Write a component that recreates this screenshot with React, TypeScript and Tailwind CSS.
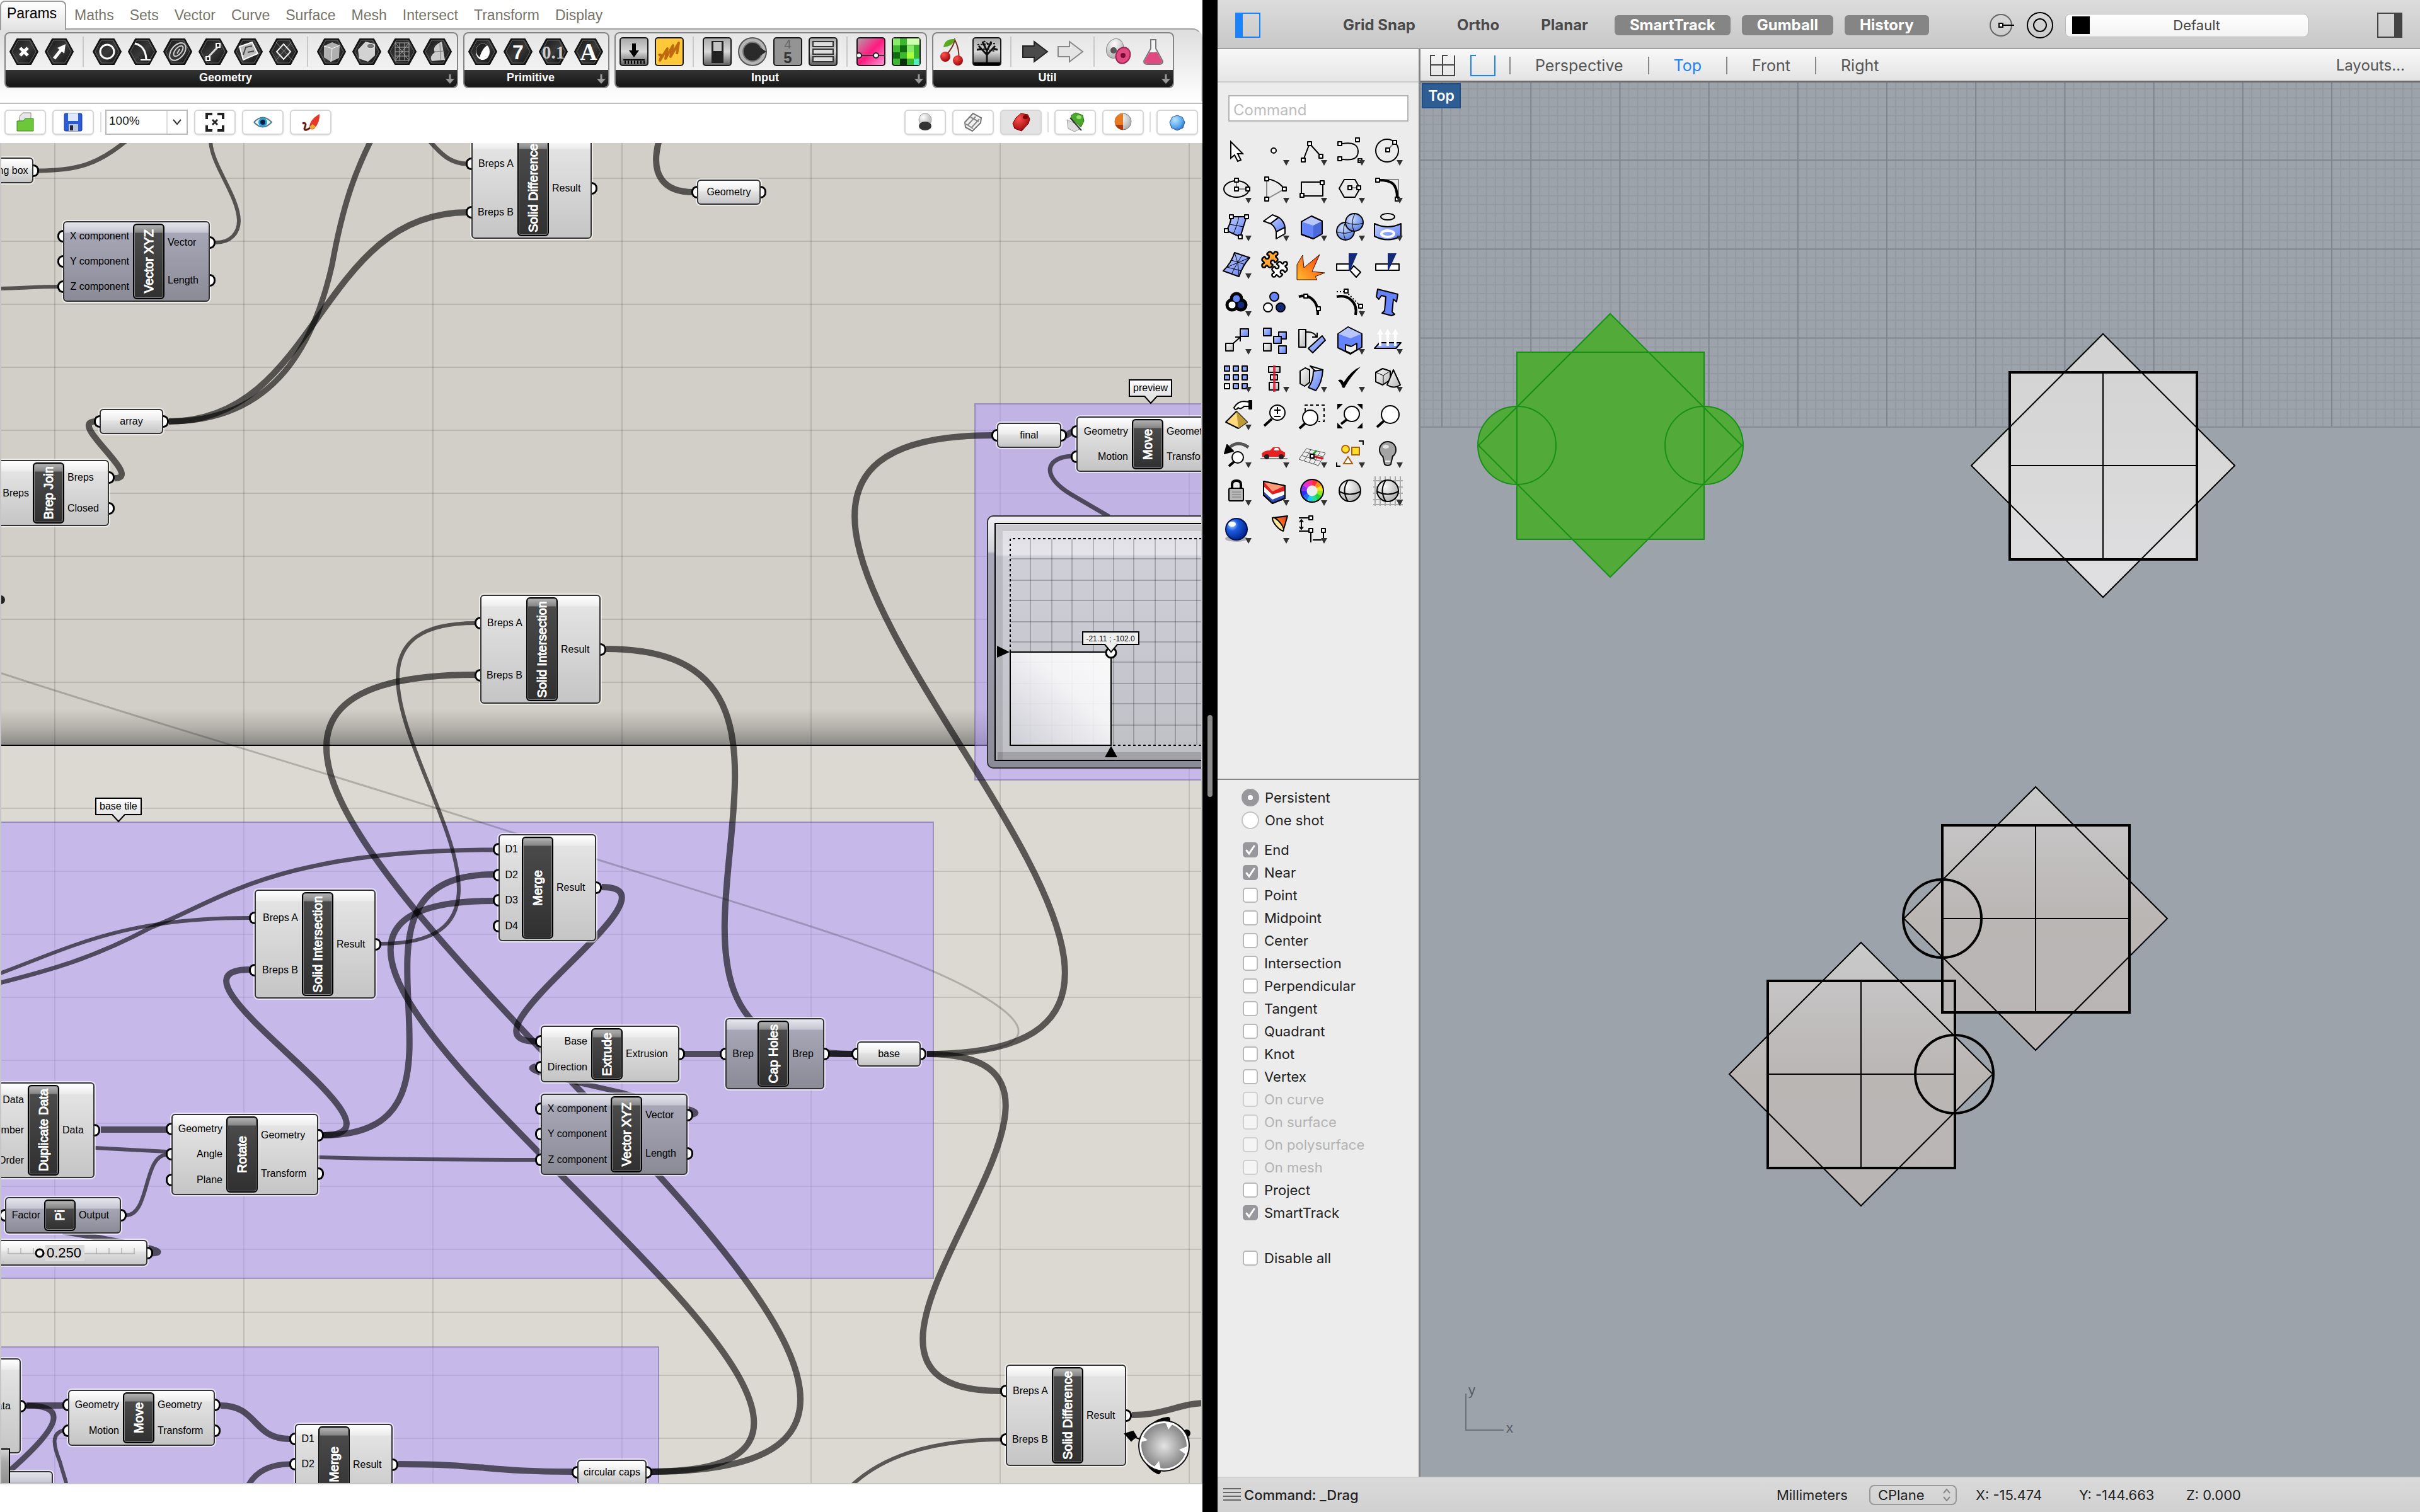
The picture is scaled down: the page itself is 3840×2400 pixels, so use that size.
import React from "react";
import { Puzzle } from "lucide-react";

/* ---------- shared paint ---------- */

function Defs() {
  return (
    <svg className="absolute h-0 w-0" aria-hidden="true">
      <defs>
        <linearGradient id="hex" x1="0" y1="0" x2="1" y2="1">
          <stop offset="0" stopColor="#111" />
          <stop offset="0.5" stopColor="#3a3a3a" />
          <stop offset="1" stopColor="#0a0a0a" />
        </linearGradient>
        <linearGradient id="steel" x1="0" y1="0" x2="0" y2="1">
          <stop offset="0" stopColor="#a8a8a8" />
          <stop offset="0.5" stopColor="#d8d8d8" />
          <stop offset="1" stopColor="#5a5a5a" />
        </linearGradient>
        <linearGradient id="blue" x1="0" y1="0" x2="1" y2="1">
          <stop offset="0" stopColor="#c3d0ff" />
          <stop offset="1" stopColor="#5b7df5" />
        </linearGradient>
        <linearGradient id="grey" x1="0" y1="0" x2="1" y2="1">
          <stop offset="0" stopColor="#ffffff" />
          <stop offset="1" stopColor="#b5b5b5" />
        </linearGradient>
        <linearGradient id="fire" x1="0" y1="1" x2="1" y2="0">
          <stop offset="0" stopColor="#ffc02e" />
          <stop offset="0.5" stopColor="#ff7a1e" />
          <stop offset="1" stopColor="#e0301e" />
        </linearGradient>
        <linearGradient id="pink" x1="0" y1="0" x2="1" y2="1">
          <stop offset="0" stopColor="#b0a0a8" />
          <stop offset="0.5" stopColor="#ff1a80" />
          <stop offset="1" stopColor="#ff9ad8" />
        </linearGradient>
        <linearGradient id="shell" x1="0" y1="0" x2="0" y2="1">
          <stop offset="0" stopColor="#d2d2d3" />
          <stop offset="0.5" stopColor="#d8d8d9" />
          <stop offset="1" stopColor="#e0e0e2" />
        </linearGradient>
        <linearGradient id="clay" x1="0" y1="0" x2="0" y2="1">
          <stop offset="0" stopColor="#cbcacb" />
          <stop offset="0.5" stopColor="#b9b6b4" />
          <stop offset="1" stopColor="#b9b5b5" />
        </linearGradient>
        <radialGradient id="ballBlue" cx="0.35" cy="0.3" r="0.8">
          <stop offset="0" stopColor="#d0e0ff" />
          <stop offset="1" stopColor="#4a76e0" />
        </radialGradient>
        <radialGradient id="ballDeep" cx="0.3" cy="0.3" r="0.8">
          <stop offset="0" stopColor="#b8dcff" />
          <stop offset="0.35" stopColor="#1a5ce0" />
          <stop offset="1" stopColor="#001a80" />
        </radialGradient>
        <radialGradient id="ballGrey" cx="0.35" cy="0.3" r="0.8">
          <stop offset="0" stopColor="#ffffff" />
          <stop offset="1" stopColor="#a8a8a8" />
        </radialGradient>
        <radialGradient id="ballRed" cx="0.35" cy="0.3" r="0.8">
          <stop offset="0" stopColor="#ff5050" />
          <stop offset="1" stopColor="#900000" />
        </radialGradient>
        <radialGradient id="ballSky" cx="0.35" cy="0.3" r="0.8">
          <stop offset="0" stopColor="#b8e4ff" />
          <stop offset="0.6" stopColor="#5aa8ec" />
          <stop offset="1" stopColor="#2a60b0" />
        </radialGradient>
        <radialGradient id="dial">
          <stop offset="0" stopColor="#e4e4e4" />
          <stop offset="1" stopColor="#868686" />
        </radialGradient>
      </defs>
    </svg>
  );
}

/* ---------- ribbon ---------- */

function Hex({ children }: { children: React.ReactNode }) {
  return (
    <svg width="46" height="46" viewBox="0 -2 46 46">
      <polygon points="1,21 12,1 34,1 45,21 34,41 12,41" fill="url(#hex)" stroke="#111" strokeWidth="2" strokeLinejoin="round" />
      <polygon points="4,21 14,3 32,3 42,21 32,39 14,39" fill="none" stroke="#666" strokeWidth="1" />
      {children}
    </svg>
  );
}

function Plate({ children, fill = "url(#steel)" }: { children: React.ReactNode; fill?: string }) {
  return (
    <svg width="46" height="46" viewBox="0 0 46 46">
      <rect x="1" y="1" width="44" height="44" rx="4" fill={fill} stroke="#1a1a1a" strokeWidth="2" />
      {children}
    </svg>
  );
}

type Tool = { label: string; art: React.ReactNode };
const sep = "sep" as const;

const geometry: (Tool | typeof sep)[] = [
  { label: "Geometry", art: <Hex><path d="M17 15 L29 27 M29 15 L17 27" stroke="#fff" strokeWidth="5" /></Hex> },
  { label: "Vector", art: <Hex><path d="M15 32 L26 18" stroke="#fff" strokeWidth="5" /><polygon points="20,15 33,9 31,24" fill="#fff" /></Hex> },
  sep,
  { label: "Circle", art: <Hex><circle cx="23" cy="21" r="11" fill="none" stroke="#fff" strokeWidth="3" /></Hex> },
  { label: "Circular Arc", art: <Hex><path d="M11 8 Q28 12 29 33" fill="none" stroke="#fff" strokeWidth="3" /><path d="M20 34 H36" stroke="#fff" strokeWidth="2" /></Hex> },
  { label: "Curve", art: <Hex><g fill="none" stroke="#ccc" strokeWidth="2"><ellipse cx="23" cy="21" rx="10" ry="16" transform="rotate(40 23 21)" /><ellipse cx="24" cy="20" rx="5" ry="10" transform="rotate(40 24 20)" /><path d="M22 24 L26 17" /></g></Hex> },
  { label: "Line", art: <Hex><path d="M14 31 L32 12" stroke="#ddd" strokeWidth="3" /><rect x="12" y="29" width="6" height="6" fill="#222" stroke="#fff" strokeWidth="2" /><rect x="28" y="8" width="6" height="6" fill="#222" stroke="#fff" strokeWidth="2" /></Hex> },
  { label: "Plane", art: <Hex><polygon points="9,13 29,6 38,24 15,34" fill="#bbb" stroke="#fff" strokeWidth="2" /><path d="M15 26 L19 14 L29 12 M22 22 L32 20" stroke="#444" strokeWidth="2" fill="none" /></Hex> },
  { label: "Rectangle", art: <Hex><path d="M11 6 L38 36 M35 6 L10 36" stroke="#888" strokeWidth="1" /><polygon points="23,9 34,21 23,33 12,21" fill="none" stroke="#eee" strokeWidth="2" /></Hex> },
  sep,
  { label: "Box", art: <Hex><polygon points="11,12 24,6 36,11 35,31 22,37 11,30" fill="#b0b0b0" /><path d="M11 12 L24 16 L36 11 M24 16 L22 37" stroke="#fff" fill="none" strokeWidth="1" /></Hex> },
  { label: "Brep", art: <Hex><polygon points="9,18 21,5 36,9 36,27 25,37 11,32" fill="#d2d2d2" /><ellipse cx="29" cy="12" rx="6" ry="4" fill="#777" stroke="#fff" /></Hex> },
  { label: "Mesh", art: <Hex><g stroke="#aaa" strokeWidth="1" fill="none"><path d="M12 7 H34 V35 H12 Z M12 14 H34 M12 21 H34 M12 28 H34 M19 7 V35 M27 7 V35 M12 7 L34 35 M34 7 L12 35" /></g></Hex> },
  { label: "Surface", art: <Hex><path d="M30 5 L35 34 L14 36 Q10 28 19 22 Q14 12 30 5Z" fill="#ccc" /><path d="M27 8 L28 34 M18 21 L33 20" stroke="#777" strokeWidth="1" /></Hex> },
];

const primitive: Tool[] = [
  { label: "Boolean", art: <Hex><ellipse cx="23" cy="21" rx="11" ry="13" fill="#fff" /><path d="M13 16 A11 13 0 0 1 30 11 Q22 16 18 30 A13 13 0 0 1 13 16" fill="#222" /></Hex> },
  { label: "Integer", art: <Hex><text x="23" y="33" textAnchor="middle" fontSize="32" fontWeight="bold" fill="#fff" fontFamily="Liberation Sans">7</text></Hex> },
  { label: "Number", art: <Hex><text x="23" y="32" textAnchor="middle" fontSize="29" fontWeight="bold" fill="#ccc" fontFamily="Liberation Serif">0.1</text></Hex> },
  { label: "Text", art: <Hex><text x="23" y="34" textAnchor="middle" fontSize="38" fontWeight="bold" fill="#fff" fontFamily="Liberation Serif">A</text></Hex> },
];

const input: (Tool | typeof sep)[] = [
  { label: "Number Slider", art: <Plate><path d="M23 10 V22" stroke="#000" strokeWidth="6" /><polygon points="15,21 31,21 23,32" fill="#000" /><path d="M6 36 H40" stroke="#000" strokeWidth="2" /><path d="M8 40 H40" stroke="#000" strokeWidth="5" strokeDasharray="2 3" /></Plate> },
  { label: "Panel", art: <Plate fill="#ffc83a"><path d="M6 29 Q13 25 8 37 L20 18 L17 34 L29 13 L25 31 L38 9 L35 27" fill="none" stroke="#c06a10" strokeWidth="4" strokeLinejoin="round" /></Plate> },
  sep,
  { label: "Toggle", art: <Plate><rect x="14" y="6" width="19" height="35" fill="#222" /><rect x="17" y="8" width="13" height="14" fill="#c4c4c4" /></Plate> },
  { label: "Knob", art: <svg width="46" height="46" viewBox="0 0 46 46"><circle cx="23" cy="23" r="22" fill="#b4b4b4" stroke="#555" strokeWidth="2" /><circle cx="23" cy="23" r="15" fill="#2a2a2a" stroke="#777" strokeWidth="2" /><polygon points="36,17 45,23 36,29" fill="#2a2a2a" /></svg> },
  { label: "Digit Scroller", art: <Plate fill="#949494"><text x="23" y="18" textAnchor="middle" fontSize="20" fill="#666" fontFamily="Liberation Sans">4</text><text x="23" y="41" textAnchor="middle" fontSize="24" fontWeight="bold" fill="#333" fontFamily="Liberation Sans">5</text></Plate> },
  { label: "Value List", art: <Plate><g fill="#ddd" stroke="#333" strokeWidth="2"><rect x="7" y="7" width="32" height="8" /><rect x="7" y="19" width="32" height="8" /><rect x="7" y="31" width="32" height="8" /></g></Plate> },
  sep,
  { label: "Gradient", art: <Plate fill="url(#pink)"><path d="M1 29 H45" stroke="#333" strokeWidth="2" /><circle cx="4" cy="29" r="4" fill="#fff" stroke="#222" strokeWidth="2" /><circle cx="31" cy="29" r="4" fill="#fff" stroke="#222" strokeWidth="2" /></Plate> },
  { label: "Image Sampler", art: <Plate fill="#3cb830"><path d="M2 2h11v11h-11z M24 13h11v11h-11z" fill="#8aea6a" /><path d="M24 2h20v10h-20z" fill="#d0ffb0" /><path d="M13 13h11v11h-11z M2 24h11v10h-11z" fill="#126a10" /><path d="M13 34h11v10h-11z" fill="#063006" /><path d="M24 24h11v10h-11z" fill="#a8ff3a" /><path d="M35 34h9v10h-9z" fill="#50f0c0" /></Plate> },
];

const util: (Tool | typeof sep)[] = [
  { label: "Cherry Picker", art: <svg width="46" height="46" viewBox="0 0 46 46"><path d="M13 30 Q26 16 28 4 Q36 20 34 34" fill="none" stroke="#7a3020" strokeWidth="2" /><path d="M10 16 Q12 2 28 3 Q26 14 10 16" fill="#5aa820" /><circle cx="13" cy="31" r="8" fill="url(#ballRed)" /><circle cx="33" cy="37" r="8" fill="url(#ballRed)" /></svg> },
  { label: "Param Viewer", art: <Plate><path d="M23 43 V22 M23 28 L10 14 M23 28 L36 14 M23 22 L16 7 M23 22 L30 7 M14 19 L7 20 M33 18 L40 20" stroke="#111" strokeWidth="3" /><path d="M8 12 L38 10 M12 18 L35 22 M18 6 L30 14" stroke="#111" strokeWidth="2" strokeDasharray="3 2" /><path d="M2 42 H44" stroke="#000" strokeWidth="4" /></Plate> },
  sep,
  { label: "Data Input", art: <svg width="46" height="46" viewBox="0 0 46 46"><path d="M4 14 H22 V7 L43 23 L22 39 V32 H4Z" fill="#4a4a4a" stroke="#222" strokeWidth="2" /></svg> },
  { label: "Data Output", art: <svg width="46" height="46" viewBox="0 0 46 46"><path d="M4 15 H22 V7 L43 23 L22 39 V31 H4Z" fill="#e4e4e4" stroke="#888" strokeWidth="2" /></svg> },
  sep,
  { label: "Trigger", art: <svg width="46" height="46" viewBox="0 0 46 46"><ellipse cx="18" cy="18" rx="13" ry="16" transform="rotate(25 18 18)" fill="url(#ballGrey)" stroke="#888" /><ellipse cx="31" cy="29" rx="11" ry="13" transform="rotate(25 31 29)" fill="#e04a80" stroke="#a02050" strokeWidth="2" /><circle cx="16" cy="21" r="5" fill="#555" /><circle cx="31" cy="29" r="4" fill="#7a1038" /></svg> },
  { label: "Fitness", art: <svg width="46" height="46" viewBox="0 0 46 46"><path d="M19 4 H27 L27 18 L38 38 Q38 43 32 43 H14 Q8 43 8 38 L19 18Z" fill="#f4f4f6" stroke="#777" strokeWidth="2" /><path d="M17 24 H29 L37 38 Q37 42 32 42 H14 Q9 42 9 38Z" fill="#e04a80" /></svg> },
];

function ToolGroup({ title, items }: { title: string; items: (Tool | typeof sep)[] }) {
  return (
    <section className="flex h-[89px] flex-col overflow-hidden rounded-lg border-2 border-[#858585] bg-linear-to-b from-[#e6e6e6] to-[#f8f8f8]">
      <div className="flex flex-1 items-center gap-[10px] pr-[8px] pl-[6px]">
        {items.map((t, i) =>
          t === sep ? (
            <span key={i} className="mx-[4px] h-12 w-[2px] bg-[#c9c9c9]" />
          ) : (
            <button key={i} aria-label={t.label} className="block">{t.art}</button>
          )
        )}
      </div>
      <div className="relative flex h-[27px] items-center justify-center bg-linear-to-b from-[#333] to-[#171717] pr-[18px] text-[18px] leading-none font-bold text-white">
        <span className="pb-1">{title}</span>
        <svg className="absolute right-[4px] bottom-[5px]" width="14" height="15" viewBox="0 0 14 15"><path d="M7 0 V8" stroke="#999" strokeWidth="3" /><polygon points="0,7 14,7 7,15" fill="#999" /></svg>
      </div>
    </section>
  );
}

const tabs = ["Maths", "Sets", "Vector", "Curve", "Surface", "Mesh", "Intersect", "Transform", "Display"];

function Ribbon() {
  return (
    <header className="h-[163px] shrink-0">
      <nav className="flex h-[45px] items-center gap-px text-[23px] leading-none text-[#77756a]">
        <button className="relative z-10 -mb-[3px] h-[47px] w-[105px] rounded-t-lg border-2 border-b-0 border-[#9b9b9b] bg-linear-to-b from-white to-[#e2e2e2] pr-1 pb-2 text-black">Params</button>
        {tabs.map((t) => (
          <button key={t} className="px-[12px] pt-[4px]">{t}</button>
        ))}
      </nav>
      <div className="flex h-[116px] items-start gap-[8px] rounded-tr-2xl border-t-2 border-r-2 border-t-[#a0a0a0] border-r-[#ddd] bg-linear-to-b from-[#dedede] to-white pt-[4px] pl-[7px]">
        <ToolGroup title="Geometry" items={geometry} />
        <ToolGroup title="Primitive" items={primitive} />
        <ToolGroup title="Input" items={input} />
        <ToolGroup title="Util" items={util} />
      </div>
    </header>
  );
}

function BarButton({ label, active, children }: { label: string; active?: boolean; children: React.ReactNode }) {
  return (
    <button
      aria-label={label}
      className={`flex h-10 w-[66px] items-center justify-center rounded-md border-2 border-[#d6d6d6] shadow-sm ${active ? "bg-[#e3e3e3]" : "bg-white"}`}
    >
      <svg width="32" height="32" viewBox="0 0 32 32">{children}</svg>
    </button>
  );
}

function CanvasBar() {
  return (
    <div className="flex h-[64px] shrink-0 items-center gap-[10px] border-t-2 border-[#bfbfbf] bg-white px-[7px] pb-1">
      <BarButton label="Open"><path d="M6 14 L8 5 L13 1 H25 V14Z" fill="#e6e6e6" stroke="#888" /><path d="M3 14 H13 L16 10 H29 V30 H3Z" fill="#6cc83a" stroke="#3a8a1a" /></BarButton>
      <BarButton label="Save"><rect x="2" y="2" width="28" height="28" rx="2" fill="#2a5cd8" stroke="#1a3a9a" /><rect x="8" y="2" width="16" height="12" fill="#dfe8ff" /><rect x="9" y="19" width="15" height="11" fill="#b8c4dc" /><rect x="11" y="21" width="5" height="8" fill="#223" /></BarButton>
      <span className="-mr-[4px] h-8 w-[2px] bg-[#ddd]" />
      <div className="relative flex h-10 w-[131px] border-2 border-[#bbb]">
        <select aria-label="Zoom" className="w-full appearance-none bg-white px-1 pb-1 text-[19px] leading-[32px] text-[#222]"><option>100%</option></select>
        <span className="pointer-events-none absolute inset-y-0 right-0 flex w-8 items-center justify-center border-l-2 border-[#ddd] bg-white">
          <svg width="16" height="10" viewBox="0 0 16 10"><path d="M2 1 L8 8 L14 1" fill="none" stroke="#333" strokeWidth="2" /></svg>
        </span>
      </div>
      <BarButton label="Zoom extents"><path d="M3 11 V3 H12 M20 3 H29 V11 M29 21 V29 H20 M12 29 H3 V21" fill="none" stroke="#222" strokeWidth="4" /><path d="M12 12 L20 20 M20 12 L12 20" stroke="#222" strokeWidth="3" /></BarButton>
      <BarButton label="Named views"><path d="M2 16 Q16 1 30 16 Q16 31 2 16" fill="#e8f4fa" stroke="#5a7a8a" strokeWidth="2" /><circle cx="16" cy="16" r="7" fill="#2aa0d8" /><circle cx="16" cy="16" r="4" fill="#0a2040" /></BarButton>
      <BarButton label="Sketch"><path d="M14 24 Q14 12 30 3 Q31 16 22 26 Q17 30 14 24" fill="#e8382a" /><path d="M14 24 L19 19 L24 23 Q18 30 14 24" fill="#e8b030" /><path d="M3 18 Q11 15 6 26 Q6 31 15 25" fill="none" stroke="#6a1a10" strokeWidth="3" /></BarButton>
      <span className="flex-1" />
      <BarButton label="No preview"><ellipse cx="16" cy="12" rx="10" ry="10" fill="url(#ballGrey)" stroke="#999" /><ellipse cx="16" cy="22" rx="10" ry="7" fill="#333" /></BarButton>
      <BarButton label="Wireframe preview"><path d="M3 16 L16 2 L29 9 L28 17 L15 30 L4 24Z" fill="#f2f2f2" stroke="#777" strokeWidth="2" /><path d="M8 20 L20 7 M13 25 L26 11 M5 19 L16 26 M12 8 L25 15" fill="none" stroke="#888" strokeWidth="2" /></BarButton>
      <BarButton label="Shaded preview" active><path d="M3 18 L8 9 L16 2 L27 4 L30 11 L28 18 L17 30 L6 26Z" fill="url(#ballRed)" stroke="#700" /><ellipse cx="23" cy="8" rx="4" ry="3" fill="#7a0000" /></BarButton>
      <span className="mx-[-1px] h-8 w-[2px] bg-[#ddd]" />
      <BarButton label="Preview selected only"><path d="M10 5 L17 1 L28 5 L30 14 L25 24 L10 10Z" fill="#4aa82a" stroke="#2a6a10" /><ellipse cx="22" cy="8" rx="4" ry="3" fill="#9ae070" /><path d="M3 12 L16 18 L23 27 L15 31 L5 26Z" fill="#ddd" stroke="#999" /><path d="M8 9 L26 29" stroke="#333" strokeWidth="2" /></BarButton>
      <BarButton label="Preview settings"><circle cx="16" cy="15" r="13" fill="url(#ballGrey)" stroke="#777" /><path d="M16 2 A13 13 0 0 0 16 28Z" fill="#e87a20" /><path d="M4 20 A13 13 0 0 0 16 28 V20Z" fill="#b03a10" /></BarButton>
      <span className="mx-[-1px] h-8 w-[2px] bg-[#ddd]" />
      <BarButton label="Mesh quality"><path d="M16 5 L24 8 L28 16 L25 25 L16 29 L7 25 L4 16 L8 8Z" fill="url(#ballSky)" stroke="#2a5aa0" strokeWidth="1" /></BarButton>
    </div>
  );
}

/* ---------- node canvas ---------- */

type NodeSpec = { x: number; y: number; w: number; h: number; t: number; title: string; ins: string[]; outs: string[]; dim?: boolean };

const nodes: NodeSpec[] = [
  { x: 100, y: 351, w: 233, h: 128, t: 111, title: "Vector XYZ", ins: ["X component", "Y component", "Z component"], outs: ["Vector", "Length"], dim: true },
  { x: 748, y: 218, w: 191, h: 161, t: 73, title: "Solid Difference", ins: ["Breps A", "Breps B"], outs: ["Result"] },
  { x: -30, y: 730, w: 203, h: 105, t: 82, title: "Brep Join", ins: ["Breps"], outs: ["Breps", "Closed"] },
  { x: 762, y: 944, w: 191, h: 173, t: 73, title: "Solid Intersection", ins: ["Breps A", "Breps B"], outs: ["Result"] },
  { x: 1708, y: 661, w: 233, h: 88, t: 88, title: "Move", ins: ["Geometry", "Motion"], outs: ["Geometry", "Transform"] },
  { x: 404, y: 1412, w: 192, h: 173, t: 75, title: "Solid Intersection", ins: ["Breps A", "Breps B"], outs: ["Result"] },
  { x: 791, y: 1324, w: 155, h: 170, t: 37, title: "Merge", ins: ["D1", "D2", "D3", "D4"], outs: ["Result"] },
  { x: 858, y: 1628, w: 220, h: 90, t: 80, title: "Extrude", ins: ["Base", "Direction"], outs: ["Extrusion"] },
  { x: 858, y: 1736, w: 233, h: 129, t: 111, title: "Vector XYZ", ins: ["X component", "Y component", "Z component"], outs: ["Vector", "Length"], dim: true },
  { x: 1151, y: 1616, w: 157, h: 113, t: 51, title: "Cap Holes", ins: ["Brep"], outs: ["Brep"], dim: true },
  { x: -34, y: 1718, w: 184, h: 152, t: 78, title: "Duplicate Data", ins: ["Data", "Number", "Order"], outs: ["Data"] },
  { x: 272, y: 1768, w: 233, h: 129, t: 87, title: "Rotate", ins: ["Geometry", "Angle", "Plane"], outs: ["Geometry", "Transform"] },
  { x: 8, y: 1900, w: 184, h: 58, t: 62, title: "Pi", ins: ["Factor"], outs: ["Output"], dim: true },
  { x: 108, y: 2206, w: 233, h: 89, t: 87, title: "Move", ins: ["Geometry", "Motion"], outs: ["Geometry", "Transform"] },
  { x: 468, y: 2260, w: 155, h: 129, t: 37, title: "Merge", ins: ["D1", "D2", "D3"], outs: ["Result"] },
  { x: 1596, y: 2166, w: 191, h: 161, t: 73, title: "Solid Difference", ins: ["Breps A", "Breps B"], outs: ["Result"] },
  { x: -150, y: 2156, w: 183, h: 151, t: 78, title: "Duplicate Data", ins: ["Data", "Number", "Order"], outs: ["Data"] },
];

const light = "bg-[linear-gradient(#ffffff,#ececec_16px,#e3e3e3_17px,#c5c5c5)]";
const dim = "bg-[linear-gradient(#e6e6ee,#c6c6d2_16px,#a6a6b6_17px,#8b8b97)]";
const shell = "absolute rounded-md border-2 border-[#333] ring-2 ring-white/60";

function Port({ side }: { side: "left" | "right" }) {
  return side === "left" ? (
    <span className="absolute top-1/2 -left-[11px] h-5 w-[9px] -translate-y-1/2 rounded-l-full border-3 border-r-0 border-black bg-white" />
  ) : (
    <span className="absolute top-1/2 -right-[11px] h-5 w-[9px] -translate-y-1/2 rounded-r-full border-3 border-l-0 border-black bg-white" />
  );
}

function GraphNode({ n }: { n: NodeSpec }) {
  return (
    <div className={`${shell} flex py-[2px] ${n.dim ? dim : light}`} style={{ left: n.x, top: n.y, width: n.w, height: n.h }}>
      <div className="flex shrink-0 flex-col" style={{ width: n.t - 2 }}>
        {n.ins.map((s) => (
          <span key={s} className="relative flex flex-1 items-center justify-end pr-[6px]"><Port side="left" />{s}</span>
        ))}
      </div>
      <div className="flex w-[50px] shrink-0 items-center justify-center overflow-hidden rounded-md border-2 border-black bg-[linear-gradient(#b4b4b4,#858585_12px,#4a4a4a_13px,#303030)] inset-ring inset-ring-[#888]">
        <span className="rotate-180 text-[20px] leading-none whitespace-nowrap text-white [-webkit-text-stroke:1px_white] [writing-mode:vertical-rl]">{n.title}</span>
      </div>
      <div className="flex flex-1 flex-col">
        {n.outs.map((s) => (
          <span key={s} className="relative flex flex-1 items-center pl-[5px]"><Port side="right" />{s}</span>
        ))}
      </div>
    </div>
  );
}

const pills = [
  { x: -60, y: 250, w: 113, h: 41, text: "bounding box" },
  { x: 1106, y: 285, w: 101, h: 40, text: "Geometry" },
  { x: 158, y: 649, w: 101, h: 40, text: "array" },
  { x: 1582, y: 671, w: 102, h: 40, text: "final" },
  { x: 1360, y: 1653, w: 101, h: 40, text: "base" },
  { x: 916, y: 2317, w: 110, h: 40, text: "circular caps" },
];

function link(x0: number, y0: number, x3: number, y3: number, h: number) {
  return `M${x0} ${y0} C${x0 + h} ${y0} ${x3 - h} ${y3} ${x3} ${y3}`;
}

const wires: [string, number][] = [
  ["M58 271 C120 271 155 262 202 222", 7],
  ["M342 385 C366 385 379 370 379 350 C378 310 334 260 334 222", 6],
  ["M0 458 C40 457 60 455 94 455", 6],
  [link(268, 669, 742, 337, 237), 10],
  ["M268 669 C440 669 500 540 527 420 C545 320 565 270 590 220", 9],
  ["M680 222 C700 245 715 260 742 260", 7],
  ["M1046 222 C1030 280 1055 305 1100 305", 10],
  [link(182, 759, 152, 669, 48), 10],
  [link(962, 1030, 1354, 1673, 456), 10],
  [link(1033, 2336, 755, 1071, 920), 10],
  [link(1033, 2336, 783, 1430, 652), 10],
  [link(513, 1802, 783, 1388, 290), 10],
  ["M783 1349 C430 1349 340 1435 240 1472 C150 1520 80 1540 0 1560", 7],
  ["M396 1457 C200 1457 120 1500 0 1545", 6],
  [link(513, 1802, 396, 1539, 164), 10],
  [link(604, 1498, 755, 989, 356), 6],
  [link(955, 1408, 851, 1653, 142), 10],
  ["M1099 1770 C1125 1762 1050 1752 990 1735 L915 1718 C860 1706 830 1696 850 1692", 8],
  ["M1086 1673 H1143 M1316 1673 H1354", 10],
  [link(1471, 1673, 1575, 691, 714), 10],
  [link(1471, 1673, 1589, 2208, 378), 10],
  ["M1796 2246 C1850 2246 1870 2228 1910 2227", 10],
  ["M1335 2375 C1390 2310 1480 2286 1588 2285", 6],
  ["M1690 692 L1702 685", 10],
  ["M1700 724 C1660 726 1650 755 1700 785 L1760 820", 7],
  ["M160 1793 H265", 10],
  ["M151 1822 C400 1836 600 1841 852 1841", 6],
  [link(200, 1929, 265, 1833, 38), 6],
  ["M240 1990 C268 1988 250 1980 100 1955", 9],
  ["M42 2231 H101", 10],
  ["M42 2231 C110 2231 95 2265 15 2335", 9],
  ["M103 2270 C80 2274 85 2295 95 2320 C102 2345 105 2350 106 2360", 6],
  [link(350, 2231, 460, 2284, 60), 10],
  ["M393 2360 C405 2335 430 2324 460 2324", 9],
  [link(632, 2324, 908, 2336, 138), 10],
];

function Tag({ x, y, text }: { x: number; y: number; text: string }) {
  return (
    <div className="absolute flex flex-col items-center" style={{ left: x, top: y }}>
      <span className="border-2 border-black bg-linear-to-b from-white to-[#e4e4e4] px-[5px] py-[2px] leading-5">{text}</span>
      <svg className="-mt-[2px]" width="20" height="14" viewBox="0 0 20 14"><polygon points="0,0 20,0 10,12" fill="#e4e4e4" /><path d="M0 1 L10 12 L20 1" fill="none" stroke="#000" strokeWidth="2" /></svg>
    </div>
  );
}

function PointSlider() {
  const cols = [1635, 1669, 1701, 1735, 1767, 1799, 1833, 1865, 1899];
  const rows = [887, 921, 953, 987, 1019, 1051, 1085, 1117, 1151];
  return (
    <svg className="absolute left-[1566px] top-[818px]" width="400" height="404" viewBox="1566 818 400 404">
      <defs>
        <linearGradient id="pad" x1="0" y1="0" x2="0" y2="1">
          <stop offset="0" stopColor="#dedee4" />
          <stop offset="0.13" stopColor="#e4e4ea" />
          <stop offset="0.14" stopColor="#cfcfd8" />
          <stop offset="1" stopColor="#bfbfc6" />
        </linearGradient>
        <linearGradient id="rim" x1="0" y1="0" x2="0" y2="1">
          <stop offset="0" stopColor="#f2f2f4" />
          <stop offset="0.14" stopColor="#d0d0da" />
          <stop offset="0.15" stopColor="#a8a8ba" />
          <stop offset="1" stopColor="#8a8a98" />
        </linearGradient>
        <linearGradient id="fill" x1="0" y1="1" x2="1" y2="0">
          <stop offset="0" stopColor="#cfcfd8" />
          <stop offset="0.6" stopColor="#f8f8fa" />
          <stop offset="1" stopColor="#ffffff" />
        </linearGradient>
      </defs>
      <rect x="1567" y="819" width="420" height="400" rx="9" fill="url(#rim)" stroke="#333" strokeWidth="2" />
      <rect x="1579" y="831" width="420" height="376" fill="url(#pad)" stroke="#000" strokeWidth="2" />
      <path d="M1586 1207 V838 H1910" fill="none" stroke="#000" strokeOpacity="0.1" strokeWidth="10" />
      <path d="M1583 1200 H1910" fill="none" stroke="#000" strokeOpacity="0.16" strokeWidth="12" />
      <g stroke="#000" strokeOpacity="0.2" strokeWidth="2">
        {cols.map((c) => <path key={c} d={`M${c} 855 V1183`} />)}
        {rows.map((r) => <path key={r} d={`M1603 ${r} H1966`} />)}
      </g>
      <rect x="1603" y="1035" width="160" height="148" fill="url(#fill)" fillOpacity="0.9" stroke="#000" strokeWidth="2" />
      <path d="M1603 1035 V855 H1966 M1766 1183 H1966" fill="none" stroke="#000" strokeWidth="2" strokeDasharray="4 4" />
      <polygon points="1582,1025 1602,1035 1582,1044" />
      <polygon points="1763,1184 1753,1202 1773,1202" />
      <circle cx="1763" cy="1036" r="8" fill="#fff" stroke="#000" strokeWidth="3" />
      <path d="M1718 1003 H1807 V1023 H1773 L1763 1035 L1753 1023 H1718Z" fill="#eee" stroke="#000" strokeWidth="2" />
      <text x="1762" y="1018" textAnchor="middle" fontSize="12" fontFamily="Liberation Sans">-21.11 ; -102.0</text>
    </svg>
  );
}

function NodeCanvas() {
  const vx = [87, 387, 687, 987, 1287, 1587, 1887];
  return (
    <main className="relative flex-1 overflow-hidden border-x-2 border-[#c6c6c6] bg-[#dcd9d2] text-[16px] leading-none text-black">
      {/* the graph lives on a free canvas whose origin is the window corner */}
      <div className="absolute -top-[227px] -left-[2px] h-[2400px] w-full">
        <svg className="absolute inset-0 h-full w-full overflow-visible">
          <defs>
            <linearGradient id="pageShade" x1="0" y1="0" x2="0" y2="1">
              <stop offset="0" stopColor="#000" stopOpacity="0" />
              <stop offset="0.5" stopColor="#000" stopOpacity="0.14" />
              <stop offset="1" stopColor="#000" stopOpacity="0.34" />
            </linearGradient>
          </defs>
          <rect x="0" y="0" width="3000" height="1183" fill="#d2cfc8" />
          <rect x="0" y="1125" width="3000" height="58" fill="url(#pageShade)" />
          <g stroke="#000" strokeOpacity="0.12" strokeWidth="2">
            {vx.map((x) => <path key={x} d={`M${x} 200 V2400`} />)}
            {Array.from({ length: 21 }, (_, i) => <path key={i} d={`M0 ${283 + i * 100} H3000`} />)}
          </g>
          <path d="M0 1183 H3000" stroke="#000" strokeWidth="2" />
          <g fill="#b097ff" fillOpacity="0.5" stroke="#503c8c" strokeOpacity="0.4" strokeWidth="2">
            <rect x="1547" y="641" width="500" height="597" />
            <rect x="-20" y="1305" width="1501" height="724" />
            <rect x="-20" y="2138" width="1065" height="300" />
          </g>
          <path d="M0 1068 C250 1150 500 1220 815 1322 C1100 1415 1380 1490 1520 1560 C1660 1630 1650 1673 1471 1673" fill="none" stroke="#000" strokeOpacity="0.2" strokeWidth="3" />
          {wires.map(([d, w], i) => <path key={i} d={d} fill="none" stroke="#000" strokeOpacity="0.6" strokeWidth={w} />)}
          <circle cx="1" cy="952" r="7" fill="#222" />
        </svg>

        {nodes.map((n, i) => <GraphNode key={i} n={n} />)}
        {pills.map((p) => (
          <div key={p.text} className={`${shell} flex items-center justify-center whitespace-nowrap ${light}`} style={{ left: p.x, top: p.y, width: p.w, height: p.h }}>
            <Port side="left" />
            {p.text}
            <Port side="right" />
          </div>
        ))}

        <div className={`${shell} -left-[60px] top-[1968px] h-[41px] w-[294px] ${light}`}>
          <Port side="right" />
          <svg className="absolute inset-0" width="290" height="37" viewBox="-58 1970 290 37">
            <path d="M12 1990 H214" stroke="#999" strokeWidth="1" />
            {Array.from({ length: 11 }, (_, i) => <path key={i} d={`M${13 + i * 20} 1981 V1990`} stroke="#999" strokeWidth="1" />)}
            <circle cx="63" cy="1989" r="6" fill="#fff" stroke="#000" strokeWidth="3" />
            <rect x="72" y="1976" width="62" height="26" fill="#dadada" />
            <text x="74" y="1996" fontSize="22" fontFamily="Liberation Sans">0.250</text>
          </svg>
        </div>
        <div className={`${shell} -left-[40px] top-[2335px] h-[60px] w-[124px] ${dim}`} />
        <div className="absolute left-0 top-[2299px] h-[80px] w-4 border-2 border-black bg-[linear-gradient(#d4d4d4,#a8a8a8_20px,#808080)]" />

        <Tag x={1791} y={602} text="preview" />
        <Tag x={151} y={1266} text="base tile" />
        <PointSlider />

        <svg className="absolute left-[1780px] top-[2240px]" width="120" height="106" viewBox="1780 2240 120 106">
          <path d="M1838 2336 A44 44 0 0 1 1853 2253" fill="none" stroke="#000" strokeWidth="8" strokeLinecap="round" />
          <path d="M1785 2276 L1798 2272 L1803 2280 L1795 2287Z M1800 2281 L1808 2284" fill="#000" stroke="#000" strokeWidth="2" />
          <circle cx="1883" cy="2275" r="6" />
          <circle cx="1847" cy="2295" r="40" fill="#fff" stroke="#111" strokeWidth="2" />
          <circle cx="1847" cy="2295" r="36" fill="url(#dial)" />
          <g fill="#fff"><polygon points="1850,2259 1861,2260 1854,2269" /><polygon points="1883,2296 1882,2309 1871,2301" /><polygon points="1831,2329 1842,2332 1839,2319" /><polygon points="1812,2279 1821,2286 1810,2289" /></g>
        </svg>
      </div>
    </main>
  );
}

/* ---------- modelling tools ---------- */

const Sq = ({ x, y }: { x: number; y: number }) => <rect x={x - 3} y={y - 3} width="6" height="6" fill="#fff" stroke="#000" strokeWidth="2" />;
const navy = "#132a78";
const G = ({ children }: { children: React.ReactNode }) => <g fill="none" stroke="#000" strokeWidth="2" strokeLinejoin="round">{children}</g>;
const Ball = () => (
  <G>
    <circle cx="30" cy="30" r="17" fill="url(#ballGrey)" />
    <path d="M13 31 Q30 40 47 31 M27 13 Q16 30 27 47" />
  </G>
);

type Art = [string, React.ReactNode, boolean?];
const tools: Art[] = [
  ["Select", <path d="M21 16 V42 L27 37 L32 47 L37 45 L32 35 H40Z" fill="#fff" stroke="#000" strokeWidth="2" />],
  ["Point", <circle cx="29" cy="30" r="4" fill="#fff" stroke="#000" strokeWidth="2" />, true],
  ["Polyline", <G><path d="M16 45 L26 19 L44 39" /><Sq x={16} y={45} /><Sq x={26} y={19} /><Sq x={44} y={39} /></G>, true],
  ["Curve", <G><path d="M18 19 C36 16 43 22 43 31 C43 42 36 46 18 44" /><Sq x={14} y={19} /><Sq x={14} y={43} /><Sq x={42} y={13} /><Sq x={46} y={46} /></G>, true],
  ["Circle", <G><circle cx="29" cy="30" r="18" /><path d="M30 29 L41 17" stroke="#888" /><Sq x={30} y={29} /><Sq x={41} y={17} /></G>, true],
  ["Ellipse", <G><ellipse cx="30" cy="31" rx="20" ry="13" /><path d="M30 17 V31 H48" stroke="#888" /><Sq x={30} y={17} /><Sq x={30} y={31} /><Sq x={48} y={31} /></G>, true],
  ["Arc", <G><path d="M18 15 V47 L46 31" stroke="#888" /><path d="M18 15 Q36 17 46 31" /><Sq x={18} y={15} /><Sq x={18} y={47} /><Sq x={46} y={31} /></G>, true],
  ["Rectangle", <G><rect x="13" y="20" width="34" height="22" /><Sq x={46} y={21} /><Sq x={14} y={41} /></G>, true],
  ["Polygon", <G><path d="M13 30 L21 16 H38 L46 30 L38 44 H21Z" /><path d="M30 29 H44" stroke="#888" /><Sq x={30} y={29} /><Sq x={44} y={29} /></G>, true],
  ["Fillet curves", <G><path d="M14 16 H47 V46" stroke="#888" /><path d="M16 17 C36 17 45 22 45 45" strokeWidth="4" /><Sq x={14} y={17} /><Sq x={45} y={47} /></G>, true],
  ["Surface from points", <G><path d="M22 15 H46 L36 47 L14 37 Q20 28 22 15Z" fill="url(#blue)" /><path d="M34 15 Q30 32 25 42 M19 27 L41 31" strokeWidth="1" /><Sq x={22} y={15} /><Sq x={46} y={15} /><Sq x={36} y={47} /><Sq x={14} y={37} /></G>, true],
  ["Surface from curves", <G><path d="M13 22 L27 12 L37 16 L24 26Z" fill="#fff" /><path d="M24 26 L37 16 Q46 22 47 32 L33 39 Q31 30 24 26Z" fill="url(#blue)" /><path d="M33 39 L47 32 V42 L33 50Z" fill="#fff" /></G>, true],
  ["Box", <G><path d="M13 23 L29 14 L46 22 V42 L32 50 L13 43Z" fill="#6684fa" /><path d="M13 23 L29 14 L46 22 L32 29Z" fill="#b9c7ff" stroke="none" /><path d="M32 29 L46 22 V42 L32 50Z" fill="#4a68d8" stroke="none" /><path d="M13 23 L29 14 L46 22 V42 L32 50 L13 43Z" /></G>, true],
  ["Solid tools", <G><circle cx="23" cy="38" r="14" fill="url(#ballBlue)" /><circle cx="37" cy="24" r="14" fill="url(#ballBlue)" /><path d="M23 24 Q38 30 51 25 M38 10 Q31 22 36 38 M9 39 Q24 44 34 38 M22 26 Q17 38 23 52" strokeWidth="1" /></G>, true],
  ["Project", <G><ellipse cx="30" cy="15" rx="11" ry="5" /><path d="M9 26 Q30 36 51 26 V46 Q30 57 9 46Z" fill="url(#blue)" /><ellipse cx="30" cy="42" rx="10" ry="5" stroke="#fff" strokeWidth="4" /></G>, true],
  ["Mesh", <G><path d="M27 12 L51 20 Q40 32 34 50 L9 41 Q22 28 27 12Z" fill="url(#blue)" /><path d="M39 16 Q30 30 22 46 M22 24 L44 31 M15 35 L38 41 M27 12 L32 28 L15 35 M51 20 L32 28 L34 50" strokeWidth="1" /></G>, true],
  ["Join", <><Puzzle x={8} y={8} width={30} height={30} fill="#ffa72e" color="#000" strokeWidth={2} /><Puzzle x={24} y={24} width={29} height={29} fill="#fff" color="#000" strokeWidth={2} /></>],
  ["Explode", <path d="M6 31 L15 16 L17 36 L42 15 L30 42 L50 44 L35 50 L38 55 H6Z" fill="url(#fire)" stroke="#3a1000" strokeWidth="1" />],
  ["Trim", <G><path d="M9 30 H29 V40 H9Z M30 40 L36 33 L47 43 L40 51Z" fill="#fff" /><path d="M28 13 H42 L30 41 H28Z" fill={navy} stroke="none" /></G>],
  ["Split", <G><path d="M11 30 H48 V40 H11Z" fill="#fff" /><path d="M30 13 H44 L31 41 H30Z" fill={navy} stroke="none" /></G>],
  ["Boolean union", <g stroke="#000"><g strokeWidth="7"><circle cx="30" cy="25" r="7" /><circle cx="23" cy="35" r="7" /><circle cx="37" cy="35" r="7" /></g><circle cx="23" cy="35" r="6" fill="#fff" /><circle cx="37" cy="35" r="6" fill={navy} /><circle cx="30" cy="25" r="6" fill="#6684fa" /></g>, true],
  ["Group", <G><circle cx="30" cy="22" r="7" fill="#6684fa" /><circle cx="20" cy="39" r="7" fill="#fff" /><circle cx="40" cy="39" r="7" fill={navy} /></G>],
  ["Edit points", <G><path d="M9 22 C24 17 40 27 39 51" strokeWidth="4" /><Sq x={20} y={21} /><Sq x={40} y={41} /></G>],
  ["Control points", <G><path d="M9 22 C26 18 43 30 39 51" strokeWidth="4" /><path d="M9 14 H24 L47 37 V50" strokeDasharray="2 3" /><Sq x={24} y={13} /><Sq x={47} y={37} /></G>, true],
  ["Text object", <G><path d="M14 10 L46 18 L44 30 L39 26 L37 46 L41 50 L36 52 L21 48 L25 44 L27 22 L20 20 L16 26 L12 22Z" fill="#6684fa" /></G>],
  ["Move", <G><rect x="13" y="36" width="12" height="12" fill="url(#grey)" /><rect x="36" y="13" width="13" height="12" fill="url(#blue)" /><path d="M25 36 L35 27 M28 26 H36 V33" /></G>, true],
  ["Copy", <G><rect x="13" y="12" width="12" height="12" fill="url(#blue)" /><rect x="13" y="36" width="12" height="12" fill="url(#grey)" /><rect x="37" y="18" width="12" height="11" fill="url(#blue)" /><rect x="29" y="25" width="12" height="11" fill="url(#blue)" /><rect x="37" y="40" width="12" height="12" fill="url(#blue)" /></G>],
  ["Rotate", <G><rect x="9" y="14" width="11" height="28" fill="url(#grey)" /><path d="M24 44 L46 24 L51 31 L31 51Z" fill="url(#blue)" /><path d="M20 18 Q34 17 37 26 M30 26 H38 V19" /></G>],
  ["Solid edit", <G><path d="M11 21 L27 10 L49 21 V42 L31 53 L11 43Z" fill="#6684fa" /><path d="M12 21 L27 11 L48 21 L31 28Z" fill="#b9c7ff" stroke="none" /><path d="M23 38 L32 41 L41 36 V46 L31 52 L23 48Z" fill="#eee" /></G>, true],
  ["Extract", <G><path d="M9 44 L17 35 H51 L43 44Z" fill="url(#blue)" /><path d="M18 40 V18 M30 40 V18 M42 40 V18" stroke="#fff" strokeWidth="4" /><path d="M13 22 L18 13 L23 22Z M25 22 L30 13 L35 22Z M37 22 L42 13 L47 22Z" fill="#fff" stroke="none" /></G>, true],
  ["Array", <G>{[15, 29, 43].map((x) => [16, 30, 44].map((y) => <rect key={x + "-" + y} x={x - 4} y={y - 4} width="8" height="8" fill={x === 15 && y === 44 ? "#fff" : "#8fa8fa"} />))}</G>, true],
  ["Align", <G><rect x="21" y="13" width="18" height="9" fill="url(#grey)" /><rect x="24" y="26" width="11" height="8" fill="url(#grey)" /><rect x="22" y="38" width="15" height="12" fill="url(#grey)" /><path d="M30 11 V53" stroke="#dc1432" strokeOpacity="0.8" strokeWidth="4" /></G>, true],
  ["Cage edit", <G><path d="M11 20 L19 15 L26 18 V38 L18 44 L11 40Z" fill="url(#grey)" /><path d="M27 12 L47 18 L44 26 L33 18Z" fill="#fff" /><path d="M24 46 Q32 36 32 20 L47 18 Q46 38 36 51Z" fill="url(#blue)" /></G>, true],
  ["Check", <path d="M11 35 Q17 31 20 38 Q32 19 47 13 Q32 27 21 47 L18 46 Q16 38 11 35Z" />, true],
  ["Analyze", <G><path d="M11 22 L22 16 L34 20 V34 L22 42 L11 37Z" fill="url(#grey)" /><path d="M11 22 L23 27 L34 20 M23 27 V41" strokeWidth="1" /><path d="M39 18 L50 42 Q40 49 29 42Z" fill="url(#grey)" /></G>, true],
  ["Drag", <G><path d="M13 41 L30 24 L47 41 L33 51Z" fill="#ffd97a" /><path d="M30 24 L47 41 L33 51Z" fill="#c09a3a" stroke="none" /><path d="M26 18 Q32 8 42 8 L50 9 V16 L42 16 Q36 22 33 18 Q28 24 26 18Z" fill="#fff" /><path d="M50 7 h4 v13 h-4z" fill="#000" /></G>, true],
  ["Zoom", <G><path d="M14 47 L26 36" strokeWidth="4" /><circle cx="35" cy="26" r="12" fill="#fff" /><path d="M35 17 V28 M30 22 H40 M30 32 H40" /></G>],
  ["Zoom window", <G><path d="M19 24 V14 H49 V40 H40" strokeDasharray="5 4" /><path d="M10 51 L19 43" strokeWidth="4" /><circle cx="27" cy="34" r="12" fill="#fff" /></G>],
  ["Zoom extents", <G><path d="M16 44 L25 37" strokeWidth="4" /><circle cx="33" cy="28" r="12" fill="#fff" /><path d="M10 12 h9 l-9 9z M50 12 h-9 l9 9z M10 51 h9 l-9 -9z M50 51 h-9 l9 -9z" fill="#000" stroke="none" /></G>],
  ["Zoom selected", <G><path d="M13 49 L24 39" strokeWidth="4" /><circle cx="34" cy="29" r="14" fill="#fff" /></G>],
  ["Undo view", <G><path d="M49 21 Q34 10 20 20" strokeWidth="5" stroke="#555" /><path d="M11 31 L15 17 L25 27Z" fill="#000" /><path d="M18 51 L26 44" strokeWidth="4" /><circle cx="32" cy="37" r="9" fill="#fff" /></G>, true],
  ["Set view", <g><path d="M8 39 H51" stroke="#888" strokeWidth="2" /><path d="M10 31 Q14 26 23 26 L28 21 H38 L41 26 L47 29 V36 H11Z" fill="#e82020" /><path d="M29 26 L31 22 H36 L38 26Z" fill="#fff" /><circle cx="18" cy="36" r="4" fill="#222" /><circle cx="41" cy="36" r="4" fill="#222" /></g>, true],
  ["CPlane", <g fill="none" stroke="#555" strokeWidth="1"><path d="M21 23 L51 30 L40 50 L9 40Z M28 25 L17 43 M36 27 L25 45 M43 28 L32 48 M17 28 L47 36 M13 34 L43 43" /><path d="M30 35 L48 39" stroke="#d01020" strokeWidth="3" /><path d="M30 34 L37 26" stroke="#20a020" strokeWidth="3" /><Sq x={30} y={35} /></g>, true],
  ["Object snap", <g stroke="#a86010" strokeWidth="2" fill="#ffe028"><circle cx="23" cy="24" r="6" /><rect x="33" y="21" width="12" height="12" /><path d="M27 36 L34 47 H20Z" fill="#fff" /><path d="M44 11 H51 V17 M9 45 V51 H15" fill="none" stroke="#000" /></g>, true],
  ["Show", <g stroke="#111" strokeWidth="2"><circle cx="30" cy="25" r="13" fill="#a4a4a4" /><path d="M22 34 L25 48 Q30 52 35 48 L38 34" fill="#a4a4a4" /><path d="M23 35 L24 32 H36 L37 35Z" fill="#a4a4a4" stroke="none" /><path d="M26 43 H34" stroke="#eee" /><ellipse cx="27" cy="20" rx="5" ry="3" fill="#e4e4e4" stroke="none" /></g>, true],
  ["Lock", <G><path d="M23 27 V20 Q23 14 30 14 Q37 14 37 20 V27" strokeWidth="4" /><rect x="18" y="26" width="23" height="20" rx="2" fill="#b8b8b8" /><path d="M23 32 H37 M23 36 H37 M23 40 H37" stroke="#777" strokeWidth="1" /></G>, true],
  ["Layers", <G><path d="M13 15 L47 22 V42 L27 50 L13 37Z" fill="#2a4ab8" /><path d="M13 15 L47 22 V36 L27 44 L13 31Z" fill="#fff" stroke="none" /><path d="M13 15 L47 22 V30 L27 36 L13 23Z" fill="#e02020" stroke="none" /><path d="M13 15 L47 22 L27 31Z" fill="#ff9a78" stroke="none" /><path d="M13 15 L47 22 V42 L27 50 L13 37Z" /></G>, true],
  ["Color", <g fill="none" strokeWidth="9">{["#ff3030", "#ff8a20", "#f4e020", "#90e820", "#20d840", "#20dca0", "#20c8f0", "#2070f0", "#3030f0", "#8a30f0", "#e030e0", "#ff3090"].map((c, i) => <path key={c} d="M30 17 A13 13 0 0 1 37 19" stroke={c} transform={`rotate(${i * 30} 30 30)`} />)}<circle cx="30" cy="30" r="18" stroke="#000" strokeWidth="2" /></g>, true],
  ["Shade", <Ball />],
  ["Render mesh", <><path d="M7 14 H54 M7 24 H54 M7 34 H54 M7 44 H54 M7 52 H54 M10 7 V54 M18 7 V54 M26 7 V54 M34 7 V54 M42 7 V54 M50 7 V54" stroke="#aaa" strokeWidth="2" /><Ball /></>, true],
  ["Render", <g><ellipse cx="30" cy="46" rx="18" ry="5" fill="#000" fillOpacity="0.25" /><circle cx="30" cy="31" r="17" fill="url(#ballDeep)" stroke="#001050" strokeWidth="2" /><ellipse cx="23" cy="23" rx="6" ry="4" fill="#fff" /></g>, true],
  ["Spotlight", <G><path d="M27 13 L51 10 L44 34Z" fill="url(#fire)" /><ellipse cx="36" cy="23" rx="4" ry="13" transform="rotate(-40 36 23)" fill="#ffe89a" /></G>, true],
  ["Dimension", <G><path d="M9 13 H28 M9 34 H28 V52 M48 37 V50 M13 17 V30 M10 20 L13 16 L16 20 M10 27 L13 31 L16 27 M31 48 H45" /><Sq x={28} y={13} /><Sq x={28} y={33} /><Sq x={48} y={33} /></G>, true],
];

function Palette() {
  return (
    <div className="grid w-[300px] grid-cols-5">
      {tools.map(([name, art, more]) => (
        <button key={name} aria-label={name} className="block h-[60px] w-[60px]">
          <svg width="60" height="60" viewBox="0 0 60 60">
            {art}
            {more && <polygon points="44,45 54,45 49,54" fill="#333" />}
          </svg>
        </button>
      ))}
    </div>
  );
}

const snaps: { name: string; on?: boolean; off?: boolean }[] = [
  { name: "End", on: true }, { name: "Near", on: true }, { name: "Point" }, { name: "Midpoint" }, { name: "Center" },
  { name: "Intersection" }, { name: "Perpendicular" }, { name: "Tangent" }, { name: "Quadrant" }, { name: "Knot" }, { name: "Vertex" },
  { name: "On curve", off: true }, { name: "On surface", off: true }, { name: "On polysurface", off: true }, { name: "On mesh", off: true },
  { name: "Project" }, { name: "SmartTrack", on: true },
];

function Check({ name, on, off }: { name: string; on?: boolean; off?: boolean }) {
  return (
    <label className={`flex h-9 items-center gap-[10px] ${off ? "text-[#b3b3b3]" : ""}`}>
      <span className="relative block h-6 w-6">
        <input type="checkbox" defaultChecked={on} disabled={off} className="peer block h-6 w-6 appearance-none rounded-[5px] border-2 border-[#b9b9b9] bg-white checked:border-[#98979c] checked:bg-[#98979c] disabled:border-[#cfcfcf] disabled:bg-[#f4f4f4]" />
        <svg className="pointer-events-none absolute inset-0 hidden peer-checked:block" width="24" height="24" viewBox="0 0 24 24"><path d="M6 13 L10 18 L18 6" fill="none" stroke="#fff" strokeWidth="3" strokeLinecap="round" /></svg>
      </span>
      {name}
    </label>
  );
}

function Radio({ name, on }: { name: string; on?: boolean }) {
  return (
    <label className="flex h-9 items-center gap-[9px]">
      <input type="radio" name="snapmode" defaultChecked={on} className="-ml-[2px] block h-7 w-7 appearance-none rounded-full border-2 border-[#c4c4c4] bg-white checked:border-10 checked:border-[#98979c]" />
      {name}
    </label>
  );
}

/* ---------- viewport ---------- */

function StarFill({ x, y }: { x: number; y: number }) {
  return <path d={`M${x} ${y - 209} L${x + 209} ${y} L${x} ${y + 209} L${x - 209} ${y}Z M${x - 148} ${y - 148} H${x + 149} V${y + 149} H${x - 148}Z`} />;
}

function StarLines({ x, y }: { x: number; y: number }) {
  return (
    <g fill="none" stroke="#000">
      <path d={`M${x} ${y - 209} L${x + 209} ${y} L${x} ${y + 209} L${x - 209} ${y}Z M${x} ${y - 148} V${y + 148} M${x - 148} ${y} H${x + 148}`} strokeWidth="2" />
      <rect x={x - 148} y={y - 148} width="297" height="297" strokeWidth="4" />
    </g>
  );
}

function Viewport() {
  return (
    <div className="relative min-w-0 flex-1 overflow-hidden bg-[#9ca3ab]">
      <svg className="absolute top-0 left-0 h-[2214px] w-[3000px]" viewBox="2254 131 3000 2214">
        <defs>
          <pattern id="minor" patternUnits="userSpaceOnUse" x="2287" y="112" width="14.12" height="14.12">
            <path d="M1 0 V15 M0 1 H15" stroke="#939aa2" strokeWidth="2" />
          </pattern>
          <pattern id="major" patternUnits="userSpaceOnUse" x="2287" y="112" width="141.2" height="141.2">
            <path d="M1 0 V142 M0 1 H142" stroke="#80868f" strokeWidth="2" />
          </pattern>
        </defs>
        <rect x="2254" y="128" width="3000" height="550" fill="url(#minor)" />
        <rect x="2254" y="128" width="3000" height="550" fill="url(#major)" />
        <path d="M2254 678 H5254" stroke="#888e97" strokeWidth="2" />

        <g fill="#52aa38">
          <StarFill x={2555} y={707} />
          <circle cx="2407" cy="707" r="62" />
          <circle cx="2704" cy="707" r="62" />
        </g>
        <g fill="none" stroke="#189018" strokeWidth="2">
          <path d="M2555 498 L2764 707 L2555 916 L2346 707Z" />
          <rect x="2407" y="559" width="297" height="297" />
          <circle cx="2407" cy="707" r="62" />
          <circle cx="2704" cy="707" r="62" />
        </g>

        <g fill="url(#shell)"><StarFill x={3337} y={739} /></g>
        <StarLines x={3337} y={739} />

        <g fill="url(#clay)">
          <StarFill x={2953} y={1705} />
          <StarFill x={3230} y={1458} />
        </g>
        <StarLines x={2953} y={1705} />
        <StarLines x={3230} y={1458} />
        <circle cx="3082" cy="1458" r="62" fill="none" stroke="#000" strokeWidth="4" />
        <circle cx="3101" cy="1705" r="62" fill="none" stroke="#000" strokeWidth="4" />

        <path d="M2326 2212 V2270 H2386" fill="none" stroke="#6b727a" strokeWidth="2" />
        <g fill="#555c64" fontSize="22" fontFamily="Liberation Sans">
          <text x="2330" y="2214">y</text>
          <text x="2390" y="2274">x</text>
        </g>
      </svg>
      <button className="absolute left-[2px] top-[1px] h-10 w-[62px] border-2 border-[#1f4f86] bg-[#2e5d93] text-[23px] leading-none font-semibold text-white">Top</button>
    </div>
  );
}

function SidebarIcon({ flip }: { flip?: boolean }) {
  return flip ? (
    <svg width="40" height="40" viewBox="0 0 40 40"><rect x="1" y="1" width="38" height="38" fill="none" stroke="#444" strokeWidth="2" /><rect x="27" y="0" width="13" height="40" fill="#444" /></svg>
  ) : (
    <svg width="40" height="40" viewBox="0 0 40 40"><rect x="1" y="1" width="38" height="38" fill="none" stroke="#1a82fb" strokeWidth="2" /><rect x="0" y="0" width="12" height="40" fill="#1a82fb" /></svg>
  );
}

const modes = [["Grid Snap", false], ["Ortho", false], ["Planar", false], ["SmartTrack", true], ["Gumball", true], ["History", true]] as const;

export default function App() {
  return (
    <div className="flex h-screen w-full overflow-hidden bg-black">
      <Defs />
      <div className="flex min-w-0 flex-1 flex-col overflow-hidden bg-white font-['Liberation_Sans',sans-serif]">
        <Ribbon />
        <CanvasBar />
        <NodeCanvas />
        <footer className="h-[46px] shrink-0 border-t-2 border-[#c6c6c6] bg-white" />
      </div>

      <div className="relative w-6 shrink-0 bg-black">
        <span className="absolute top-[1135px] left-2 h-[130px] w-2 rounded-full bg-[#8a8a8a]" />
      </div>

      <div className="flex min-w-0 flex-1 flex-col overflow-hidden bg-[#ececec] font-[Inter,sans-serif] text-[22px] leading-none text-[#222]">
        <header className="flex h-[78px] shrink-0 items-center border-b-2 border-[#a0a0a0] bg-linear-to-b from-[#dcdcdc] to-[#c8c8c8] px-7 pt-2 pb-1">
          <button aria-label="Toggle left sidebar"><SidebarIcon /></button>
          <div className="ml-[107px] flex gap-[18px]">
            {modes.map(([m, on]) => (
              <button key={m} aria-pressed={on} className={`h-8 rounded-md px-6 text-[24px] leading-none font-bold ${on ? "bg-[#858585] text-white" : "text-[#4a4a4a]"}`}>{m}</button>
            ))}
          </div>
          <button aria-label="Record history" className="ml-[94px]"><svg width="42" height="42" viewBox="0 0 42 42"><circle cx="20" cy="21" r="17" fill="none" stroke="#666" strokeWidth="2" /><path d="M23 21 H41" stroke="#000" strokeWidth="2" /><Sq x={20} y={21} /></svg></button>
          <button aria-label="Object target" className="ml-[18px]"><svg width="44" height="44" viewBox="0 0 44 44" fill="none" stroke="#000" strokeWidth="2"><circle cx="22" cy="22" r="20" /><circle cx="22" cy="22" r="10" /></svg></button>
          <button className="ml-[18px] flex h-[37px] w-[386px] items-center rounded-lg border border-[#bbb] bg-linear-to-b from-white to-[#f3f3f3] pl-[10px] text-[22px] leading-none text-[#444]">
            <span className="h-7 w-7 bg-black" />
            <span className="flex-1 pr-[6px] text-center">Default</span>
          </button>
          <button aria-label="Toggle right sidebar" className="ml-auto"><SidebarIcon flip /></button>
        </header>

        <div className="flex min-h-0 flex-1">
          <aside className="flex w-[322px] shrink-0 flex-col border-r-3 border-[#858585]">
            <div className="h-[53px] shrink-0 border-b-2 border-[#cacaca] bg-linear-to-b from-[#f7f7f7] to-[#e6e6e6]" />
            <input aria-label="Command" placeholder="Command" className="mt-5 ml-[17px] h-[42px] w-[286px] border-2 border-[#b4b4b4] bg-white px-[6px] pt-1 text-[24px] placeholder:text-[#bdbdbd]" />
            <div className="mt-4"><Palette /></div>
            <form className="mt-[367px] flex-1 border-t-2 border-[#858585] pl-10">
              <fieldset className="pt-[10px]">
                <Radio name="Persistent" on />
                <Radio name="One shot" />
              </fieldset>
              <fieldset className="pt-[11px]">
                {snaps.map((s) => <Check key={s.name} {...s} />)}
              </fieldset>
              <div className="pt-9"><Check name="Disable all" /></div>
            </form>
          </aside>

          <div className="flex min-w-0 flex-1 flex-col">
            <nav className="flex h-[53px] shrink-0 items-center border-b-3 border-[#6e6e6e] bg-linear-to-b from-[#f8f8f8] to-[#e3e3e3] pt-[2px] pl-[14px] text-[25px] leading-none text-[#555]">
              <button aria-label="Four views"><svg width="42" height="36" viewBox="0 0 42 36" fill="none" stroke="#444" strokeWidth="2"><path d="M9 2 H2 V34 H40 V2 M21 34 V2 H29 M2 17 H40" /></svg></button>
              <button aria-label="Single view" className="ml-[22px]"><svg width="42" height="36" viewBox="0 0 42 36" fill="none" stroke="#1a82fb" strokeWidth="2"><path d="M10 2 H2 V34 H40 V2" /></svg></button>
              <span className="ml-[21px] h-7 w-[2px] bg-[#888]" />
              <button className="px-[39px]">Perspective</button>
              <span className="h-7 w-[2px] bg-[#888]" />
              <button className="px-[39px] text-[#1a82fb]">Top</button>
              <span className="h-7 w-[2px] bg-[#888]" />
              <button className="px-[39px]">Front</button>
              <span className="h-7 w-[2px] bg-[#888]" />
              <button className="px-[39px]">Right</button>
              <button className="ml-auto pr-6 text-[24px] leading-none">Layouts...</button>
            </nav>
            <Viewport />
          </div>
        </div>

        <footer className="flex h-14 shrink-0 items-center border-t-2 border-[#cfcfcf] bg-linear-to-b from-[#dadada] to-[#d0d0d0] pr-[284px] pl-[9px]">
          <svg width="28" height="22" viewBox="0 0 28 22" stroke="#666" strokeWidth="2"><path d="M0 1 H28 M0 7 H28 M0 13 H28 M0 19 H28" /></svg>
          <span className="ml-[5px] font-medium">Command: _Drag</span>
          <span className="ml-auto">Millimeters</span>
          <div className="relative ml-[34px]">
            <select aria-label="Coordinate system" className="h-8 w-[139px] appearance-none rounded-lg border-2 border-[#999] bg-transparent pl-[12px] leading-[28px]"><option>CPlane</option></select>
            <svg className="pointer-events-none absolute top-[6px] right-[9px]" width="14" height="20" viewBox="0 0 14 20" fill="none" stroke="#888" strokeWidth="2"><path d="M2 7 L7 1 L12 7 M2 13 L7 19 L12 13" /></svg>
          </div>
          <span className="ml-[30px] w-[164px]">X: -15.474</span>
          <span className="w-[170px]">Y: -144.663</span>
          <span>Z: 0.000</span>
        </footer>
      </div>
    </div>
  );
}
